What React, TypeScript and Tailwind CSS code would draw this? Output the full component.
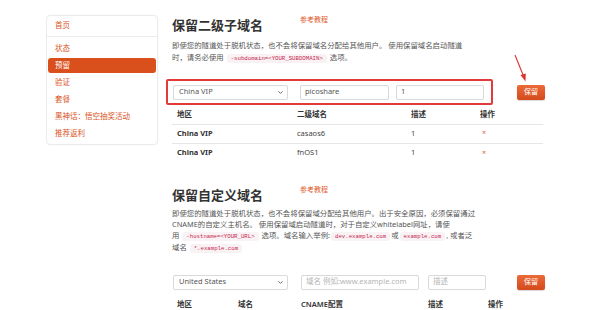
import { ChevronDown } from 'lucide-react';

const font = { fontFamily: '"Noto Sans", "Noto Sans CJK SC", sans-serif' };

function Code({ children }: { children: string }) {
  return (
    <code className="mx-[1px] rounded-[3px] bg-[#f9f2f4] px-[4px] py-[1px] font-['Liberation_Mono',monospace] text-[5.7px] text-[#c7254e]">
      {children}
    </code>
  );
}

function Select({ value }: { value: string }) {
  return (
    <div className="flex h-[15px] w-[115px] items-center justify-between rounded-[2px] border border-[#d9d9d9] bg-white pl-[5px] pr-[3px] text-[7.5px] text-[#555]">
      <span>{value}</span>
      <ChevronDown className="h-[7px] w-[7px] text-[#555]" strokeWidth={3} />
    </div>
  );
}

function Input({ value, placeholder, width }: { value?: string; placeholder?: string; width: string }) {
  return (
    <div className={`flex h-[15px] items-center rounded-[2px] border border-[#d9d9d9] bg-white pl-[4px] text-[7.5px] ${width}`}>
      {value ? <span className="text-[#555]">{value}</span> : <span className="text-[#b5b5b5]">{placeholder}</span>}
    </div>
  );
}

function SaveButton() {
  return (
    <button
      type="button"
      className="flex h-[15px] w-[28px] items-center justify-center rounded-[2px] bg-gradient-to-b from-[#ec6a38] to-[#d44a1a] text-[7px] text-white shadow-[0_1px_1px_rgba(0,0,0,0.15)]"
    >
      保留
    </button>
  );
}

function SectionTitle({ title }: { title: string }) {
  return (
    <div className="flex h-[18px] items-center">
      <h2 className="w-[128px] text-[13px] font-bold leading-[18px] text-[#333]">{title}</h2>
      <a className="-mt-[10px] text-[7px] text-[#e05a2b]">参考教程</a>
    </div>
  );
}

const nav = ['状态', '预留', '验证', '套餐', '黑神话：悟空抽奖活动', '推荐返利'];

export default function App() {
  return (
    <div className="relative h-[310px] w-[600px] overflow-hidden bg-white" style={font}>
      <div className="flex items-start gap-[14px] pl-[46px]">
        <aside className="mt-[15px] w-[112px] rounded-[4px] border border-[#ebebeb] bg-white shadow-[0_0_2px_rgba(0,0,0,0.04)]">
          <div className="flex h-[21px] items-center border-b border-[#ebebeb] pl-[8px] text-[7.5px] text-[#d9541e]">首页</div>
          <ul className="flex flex-col gap-[2px] px-[1px] pb-[3px] pt-[4px]">
            {nav.map((item) => (
              <li
                key={item}
                className={
                  item === '预留'
                    ? 'flex h-[15px] items-center rounded-[3px] bg-[#d9501d] pl-[7px] text-[7.5px] text-white'
                    : 'flex h-[15px] items-center pl-[7px] text-[7.5px] text-[#d9541e]'
                }
              >
                {item}
              </li>
            ))}
          </ul>
        </aside>

        <main className="w-[373px] pt-[16px]">
          <SectionTitle title="保留二级子域名" />
          <p className="mt-[5px] text-[7.4px] leading-[12px] text-[#555]">
            即使您的隧道处于脱机状态，也不会将保留域名分配给其他用户。 使用保留域名启动隧道
            <br />
            时，请务必使用 <Code>-subdomain=&lt;YOUR_SUBDOMAIN&gt;</Code> 选项。
          </p>

          <div className="mt-[14px] flex items-center justify-between">
            <div className="-ml-[6px] flex h-[26px] w-[327px] items-center gap-[12px] rounded-[2px] border-2 border-[#e23a3a] pl-[5px]">
              <Select value="China VIP" />
              <Input value="picoshare" width="w-[89px]" />
              <Input value="1" width="-ml-[5px] w-[88px]" />
            </div>
            <SaveButton />
          </div>

          <table className="mt-[1px] w-[371px] table-fixed border-collapse text-left text-[7.5px] text-[#333]">
            <colgroup>
              <col className="w-[120px]" />
              <col className="w-[114px]" />
              <col className="w-[69px]" />
              <col className="w-[68px]" />
            </colgroup>
            <thead>
              <tr className="h-[18px] border-b border-[#e6e6e6]">
                <th className="pl-[5px] font-semibold">地区</th>
                <th className="pl-[5px] font-semibold">二级域名</th>
                <th className="pl-[5px] font-semibold">描述</th>
                <th className="pl-[5px] font-semibold">操作</th>
              </tr>
            </thead>
            <tbody>
              {[
                ['China VIP', 'casaos6', '1'],
                ['China VIP', 'fnOS1', '1'],
              ].map(([region, name, desc], i) => (
                <tr key={name} className={i > 0 ? 'h-[19px] border-t border-[#e6e6e6]' : 'h-[19px]'}>
                  <td className="pl-[5px] font-bold">{region}</td>
                  <td className="pl-[5px] text-[#444]">{name}</td>
                  <td className="pl-[5px] text-[#444]">{desc}</td>
                  <td className="pl-[7px] text-[7px] text-[#e05a2b]">×</td>
                </tr>
              ))}
            </tbody>
          </table>

          <div className="mt-[24px]">
            <SectionTitle title="保留自定义域名" />
          </div>
          <p className="mt-[4px] text-[7.4px] leading-[11px] text-[#555]">
            即使您的隧道处于脱机状态，也不会将保留域分配给其他用户。出于安全原因，必须保留通过
            <br />
            CNAME的自定义主机名。 使用保留域启动隧道时，对于自定义whitelabel网址，请使
            <br />
            用 <Code>-hostname=&lt;YOUR_URL&gt;</Code> 选项。域名输入举例:<Code>dev.example.com</Code>或<Code>example.com</Code>, 或者泛
            <br />
            域名 <Code>*.example.com</Code>
          </p>

          <div className="mt-[15px] flex items-center justify-between">
            <div className="-ml-[6px] flex h-[26px] items-center rounded-[2px] border-2 border-transparent pl-[5px]">
              <Select value="United States" />
              <Input placeholder="域名 例如:www.example.com" width="ml-[13px] w-[118px]" />
              <Input placeholder="描述" width="ml-[9px] w-[58px]" />
            </div>
            <SaveButton />
          </div>

          <div className="mt-[1px] flex h-[18px] items-center text-[7.5px] font-semibold text-[#333]">
            <span className="w-[61px] pl-[5px]">地区</span>
            <span className="w-[67px] pl-[5px]">域名</span>
            <span className="w-[128px] pl-[1px]">CNAME配置</span>
            <span className="w-[60px]">描述</span>
            <span>操作</span>
          </div>
        </main>
      </div>

      <svg className="absolute left-[510px] top-[50px]" width="22" height="36" viewBox="0 0 22 36" fill="none">
        <line x1="5" y1="5" x2="13.5" y2="26" stroke="#e0302f" strokeWidth="1.1" />
        <path d="M10.5 25 L15.5 31.5 L15.8 23.5 Z" fill="#e0302f" />
      </svg>
    </div>
  );
}
